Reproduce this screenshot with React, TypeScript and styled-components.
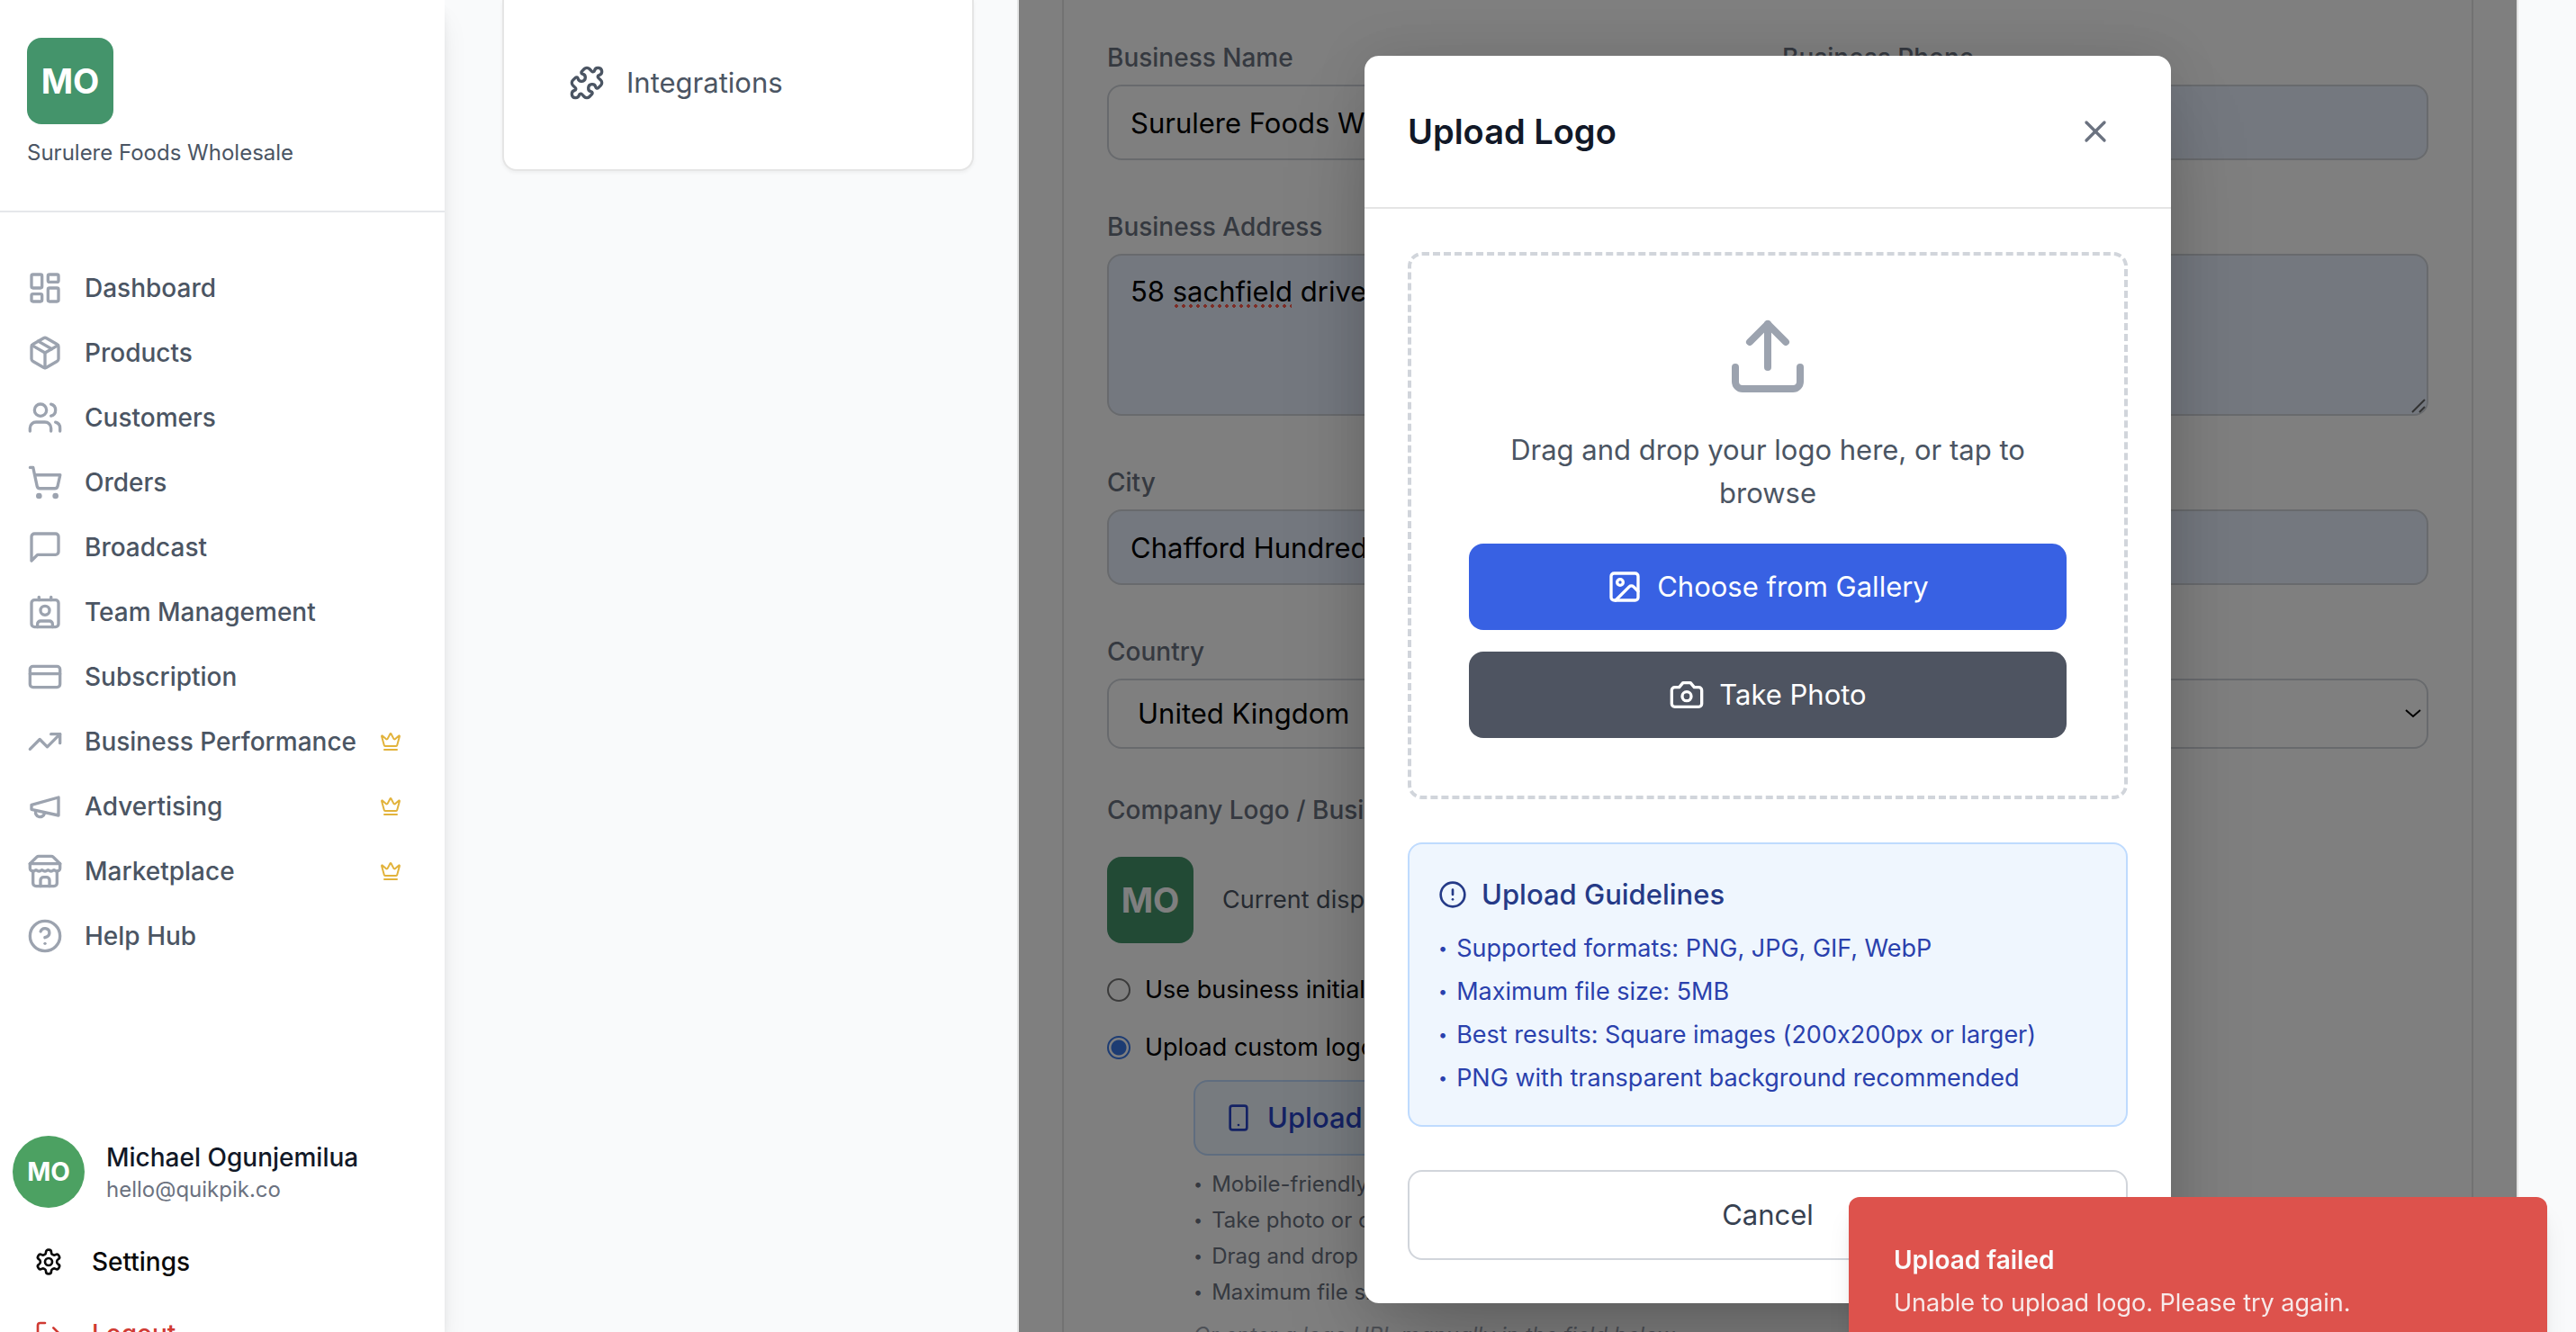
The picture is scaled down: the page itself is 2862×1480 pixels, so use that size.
import React from "react";
import styled, { createGlobalStyle, css } from "styled-components";
import {
  LayoutDashboard,
  Package,
  Users,
  ShoppingCart,
  Contact,
  CreditCard,
  TrendingUp,
  CircleHelp,
  Crown,
  Upload,
  Image as ImageIcon,
  CircleAlert,
  Smartphone,
  X,
  Puzzle,
  LogOut,
} from "lucide-react";

const GlobalStyle = createGlobalStyle`
  *, *::before, *::after { box-sizing: border-box; }
  body {
    margin: 0;
    overflow: hidden;
    background: #f9fafb;
    color: #0a0a0a;
    font-family: Inter, "Noto Sans", "Liberation Sans", sans-serif;
    font-feature-settings: "calt" 0;
    font-size: 28px;
    line-height: 40px;
  }
  button, input, textarea, select { font: inherit; color: inherit; }
  h2, h3, p, ul { margin: 0; padding: 0; }
  ul { list-style: none; }
  svg { display: block; flex: none; }
`;

/* ---------- icons ---------- */

type IconProps = { size?: number };

const Stroke = ({ size = 40, children }: IconProps & { children: React.ReactNode }) => (
  <svg
    width={size}
    height={size}
    viewBox="0 0 24 24"
    fill="none"
    stroke="currentColor"
    strokeWidth={2}
    strokeLinecap="round"
    strokeLinejoin="round"
    aria-hidden="true"
  >
    {children}
  </svg>
);

const ChatIcon = (p: IconProps) => (
  <Stroke {...p}>
    <path d="M21 15a2 2 0 0 1-2 2H7l-4 4V5a2 2 0 0 1 2-2h14a2 2 0 0 1 2 2z" />
  </Stroke>
);

const MegaphoneIcon = (p: IconProps) => (
  <Stroke {...p}>
    <path d="m3 11 18-5v12L3 14v-3z" />
    <path d="M11.6 16.8a3 3 0 1 1-5.8-1.6" />
  </Stroke>
);

const StoreIcon = (p: IconProps) => (
  <Stroke {...p}>
    <path d="m2 7 4.41-4.41A2 2 0 0 1 7.83 2h8.34a2 2 0 0 1 1.42.59L22 7" />
    <path d="M4 12v8a2 2 0 0 0 2 2h12a2 2 0 0 0 2-2v-8" />
    <path d="M15 22v-4a2 2 0 0 0-2-2h-2a2 2 0 0 0-2 2v4" />
    <path d="M2 7h20" />
    <path d="M22 7v3a2 2 0 0 1-2 2a2.7 2.7 0 0 1-1.59-.63.7.7 0 0 0-.82 0A2.7 2.7 0 0 1 16 12a2.7 2.7 0 0 1-1.59-.63.7.7 0 0 0-.82 0A2.7 2.7 0 0 1 12 12a2.7 2.7 0 0 1-1.59-.63.7.7 0 0 0-.82 0A2.7 2.7 0 0 1 8 12a2.7 2.7 0 0 1-1.59-.63.7.7 0 0 0-.82 0A2.7 2.7 0 0 1 4 12a2 2 0 0 1-2-2V7" />
  </Stroke>
);

const CameraIcon = (p: IconProps) => (
  <Stroke {...p}>
    <path d="M14.5 4h-5L7 7H4a2 2 0 0 0-2 2v9a2 2 0 0 0 2 2h16a2 2 0 0 0 2-2V9a2 2 0 0 0-2-2h-3l-2.5-3z" />
    <circle cx="12" cy="13" r="3" />
  </Stroke>
);

const GearIcon = (p: IconProps) => (
  <Stroke {...p}>
    <path d="M12.22 2h-.44a2 2 0 0 0-2 2v.18a2 2 0 0 1-1 1.73l-.43.25a2 2 0 0 1-2 0l-.15-.08a2 2 0 0 0-2.73.73l-.22.38a2 2 0 0 0 .73 2.73l.15.1a2 2 0 0 1 1 1.72v.51a2 2 0 0 1-1 1.74l-.15.09a2 2 0 0 0-.73 2.73l.22.38a2 2 0 0 0 2.73.73l.15-.08a2 2 0 0 1 2 0l.43.25a2 2 0 0 1 1 1.73V20a2 2 0 0 0 2 2h.44a2 2 0 0 0 2-2v-.18a2 2 0 0 1 1-1.73l.43-.25a2 2 0 0 1 2 0l.15.08a2 2 0 0 0 2.73-.73l.22-.39a2 2 0 0 0-.73-2.73l-.15-.08a2 2 0 0 1-1-1.74v-.5a2 2 0 0 1 1-1.74l.15-.09a2 2 0 0 0 .73-2.73l-.22-.38a2 2 0 0 0-2.73-.73l-.15.08a2 2 0 0 1-2 0l-.43-.25a2 2 0 0 1-1-1.73V4a2 2 0 0 0-2-2z" />
    <circle cx="12" cy="12" r="3" />
  </Stroke>
);

/* ---------- shell ---------- */

const Shell = styled.div`
  display: flex;
  height: 100vh;
  overflow: hidden;
`;

const Sidebar = styled.aside`
  display: flex;
  flex: none;
  flex-direction: column;
  width: 494px;
  background: #fff;
  box-shadow: 0 20px 30px -6px rgba(0, 0, 0, 0.1), 0 8px 12px -4px rgba(0, 0, 0, 0.1);
`;

const Brand = styled.header`
  display: flex;
  flex-direction: column;
  gap: 16px;
  padding: 42px 30px 48px;
  border-bottom: 2px solid #e5e7eb;
`;

const LogoTile = styled.div`
  display: flex;
  flex: none;
  align-items: center;
  justify-content: center;
  width: 96px;
  height: 96px;
  border-radius: 16px;
  background: #44946b;
  color: #fff;
  font-size: 38px;
  font-weight: 700;
`;

const BrandName = styled.p`
  color: #4b5563;
  font-size: 24px;
  line-height: 32px;
`;

const Nav = styled.nav`
  display: flex;
  flex-direction: column;
  padding: 48px 48px 0 30px;
`;

const NavLink = styled.a`
  display: flex;
  align-items: center;
  gap: 24px;
  height: 72px;
  color: #4b5563;
  font-weight: 500;
  text-decoration: none;
  white-space: nowrap;

  > svg:first-child { color: #9ca3af; }
  > svg:last-child:not(:first-child) { margin-left: auto; color: #e2b33c; }
`;

const Account = styled.div`
  display: flex;
  flex-direction: column;
  margin-top: 186px;
  padding: 0 14px;
`;

const Profile = styled.div`
  display: flex;
  align-items: center;
  gap: 24px;
  margin-bottom: 20px;
`;

const Avatar = styled.div`
  display: flex;
  align-items: center;
  justify-content: center;
  width: 80px;
  height: 80px;
  border-radius: 50%;
  background: #4ca162;
  color: #fff;
  font-weight: 700;
`;

const ProfileText = styled.div`
  padding-top: 4px;
`;

const ProfileName = styled.p`
  color: #111827;
  font-weight: 500;
  line-height: 36px;
`;

const ProfileMail = styled.p`
  color: #6b7280;
  font-size: 24px;
  line-height: 36px;
`;

const AccountAction = styled.button<{ $danger?: boolean }>`
  display: flex;
  align-items: center;
  gap: 32px;
  height: 80px;
  padding: 0 24px;
  border: 0;
  background: none;
  color: ${(p) => (p.$danger ? "#d03a33" : "#0a0a0a")};
  font-weight: 500;
`;

const Main = styled.main`
  display: grid;
  flex: 1;
  grid-template-columns: repeat(4, minmax(0, 1fr));
  gap: 48px;
  align-items: start;
  min-width: 0;
  padding: 0 64px;
`;

const TabsCard = styled.section`
  padding: 44px 50px 48px;
  border: 2px solid #e5e5e5;
  border-top: 0;
  border-radius: 0 0 16px 16px;
  background: #fff;
  box-shadow: 0 2px 4px rgba(0, 0, 0, 0.05);
`;

const TabButton = styled.button`
  display: flex;
  align-items: center;
  gap: 24px;
  width: 100%;
  height: 96px;
  padding: 0 22px;
  border: 0;
  background: none;
  color: #4b5563;
  font-size: 31px;
`;

const SettingsCard = styled.section`
  position: relative;
  grid-column: span 3;
  height: 100vh;
  overflow: hidden;
  padding: 0 48px;
  border: solid #e5e5e5;
  border-width: 0 2px;
  background: #fff;
`;

/* ---------- form ---------- */

const FormPanel = styled.form`
  padding: 50px 48px 0;
  border: solid #e5e5e5;
  border-width: 0 2px;
`;

const Fields = styled.div`
  display: grid;
  grid-template-columns: 1fr 1fr;
  gap: 60px 32px;
`;

const Field = styled.div<{ $wide?: boolean }>`
  display: flex;
  flex-direction: column;
  gap: 16px;
  grid-column: ${(p) => (p.$wide ? "1 / -1" : "auto")};
`;

const FieldLabel = styled.label`
  color: #6b7280;
  font-weight: 500;
  line-height: 28px;
`;

const boxed = css`
  display: block;
  width: 100%;
  border: 2px solid #d1d5db;
  border-radius: 16px;
  color: #000;
  font-size: 31px;
  line-height: 48px;
`;

const TextInput = styled.input<{ $filled?: boolean }>`
  ${boxed}
  height: 84px;
  padding: 0 24px;
  background: ${(p) => (p.$filled ? "#e8f0fe" : "#fff")};
`;

const Overlaid = styled.div`
  position: relative;
`;

const TextArea = styled.textarea`
  ${boxed}
  height: 180px;
  padding: 16px 24px;
  background: #e8f0fe;
  resize: none;
`;

const SpellingDots = styled.span`
  position: absolute;
  top: 56px;
  left: 73px;
  width: 132px;
  height: 4px;
  background: radial-gradient(circle, #ff5a4d 2px, transparent 2px) 0 0 / 8px 4px;
`;

const ResizeGrip = styled.svg`
  position: absolute;
  right: 3px;
  bottom: 3px;
`;

const Select = styled.select`
  ${boxed}
  height: 78px;
  padding: 0 32px;
  background: #fff;
  appearance: none;
`;

const SelectArrow = styled.svg`
  position: absolute;
  top: 34px;
  right: 8px;
  pointer-events: none;
`;

const LogoSection = styled.section`
  display: flex;
  flex-direction: column;
  margin-top: 48px;
`;

const LogoHeading = styled.h3`
  margin: 0;
  color: #6b7280;
  font-size: 28px;
  font-weight: 500;
`;

const CurrentLogo = styled.div`
  display: flex;
  align-items: center;
  gap: 32px;
  margin: 32px 0;
`;

const CurrentText = styled.p`
  color: #4b5563;
  font-size: 27px;
`;

const RadioGroup = styled.div`
  display: flex;
  flex-direction: column;
  gap: 24px;
`;

const RadioRow = styled.label`
  display: flex;
  align-items: center;
  gap: 16px;
  color: #000;
  font-size: 27px;
`;

const Radio = styled.input`
  width: 26px;
  height: 26px;
  margin: 0;
  border: 2px solid #767676;
  border-radius: 50%;
  background: #fff;
  appearance: none;

  &:checked {
    border-color: #3b78e7;
    background: radial-gradient(circle, #3b78e7 8px, #fff 9px);
  }
`;

const UploadBlock = styled.div`
  display: flex;
  flex-direction: column;
  align-items: flex-start;
  gap: 16px;
  margin: 16px 0 0 96px;
`;

const UploadButton = styled.button`
  display: flex;
  align-items: center;
  gap: 16px;
  height: 84px;
  padding: 0 32px;
  border: 2px solid #bfdbfe;
  border-radius: 16px;
  background: #eff6ff;
  color: #2945c8;
  font-size: 31px;
  font-weight: 500;
`;

const HintList = styled.ul`
  display: flex;
  flex-direction: column;
  gap: 8px;
  color: #6b7280;
  font-size: 24px;
  line-height: 32px;
`;

const UrlNote = styled.p`
  color: #9ca3af;
  font-size: 24px;
  font-style: italic;
  line-height: 32px;
`;

const ListItem = styled.li`
  display: flex;
  gap: 10px;
`;

const Bullet = styled.span`
  font-size: 18px;
`;

/* ---------- dialog ---------- */

const Backdrop = styled.div`
  position: absolute;
  inset: 0;
  display: flex;
  align-items: flex-start;
  justify-content: center;
  padding: 62px 32px 0;
  background: rgba(0, 0, 0, 0.5);
`;

const Dialog = styled.div`
  width: 100%;
  max-width: 896px;
  border-radius: 16px;
  background: #fff;
  box-shadow: 0 50px 100px -24px rgba(0, 0, 0, 0.25), 0 0 60px rgba(0, 0, 0, 0.1);
`;

const DialogHeader = styled.header`
  display: flex;
  align-items: center;
  justify-content: space-between;
  padding: 48px;
  border-bottom: 2px solid #e5e5e5;
`;

const DialogTitle = styled.h2`
  color: #111827;
  font-size: 38px;
  font-weight: 600;
  line-height: 56px;
`;

const CloseButton = styled.button`
  padding: 16px;
  border: 0;
  background: none;
  color: #6b7280;
`;

const DialogBody = styled.div`
  display: flex;
  flex-direction: column;
  gap: 48px;
  padding: 48px;
`;

const DropZone = styled.div`
  display: flex;
  flex-direction: column;
  align-items: center;
  padding: 64px;
  border: 4px dashed #d1d5db;
  border-radius: 16px;
  color: #9ca3af;
`;

const DropText = styled.p`
  margin: 32px 0;
  color: #4b5563;
  font-size: 31px;
  line-height: 48px;
  text-align: center;
`;

const DropActions = styled.div`
  display: flex;
  flex-direction: column;
  gap: 24px;
  width: 100%;
`;

const SolidButton = styled.button<{ $tone: string }>`
  display: flex;
  align-items: center;
  justify-content: center;
  gap: 16px;
  height: 96px;
  border: 0;
  border-radius: 16px;
  background: ${(p) => p.$tone};
  color: #fff;
  font-size: 31px;
`;

const Guidelines = styled.section`
  padding: 32px;
  border: 2px solid #bfdbfe;
  border-radius: 16px;
  background: #eff6fe;
`;

const GuidelinesTitle = styled.h3`
  display: flex;
  align-items: center;
  gap: 16px;
  margin: 0 0 16px;
  color: #253a87;
  font-size: 31px;
  font-weight: 500;
  line-height: 48px;
`;

const GuidelinesList = styled.ul`
  display: flex;
  flex-direction: column;
  gap: 8px;
  color: #2a41ad;
  font-size: 27px;
`;

const CancelButton = styled.button`
  height: 100px;
  border: 2px solid #d1d5db;
  border-radius: 16px;
  background: #fff;
  color: #374151;
  font-size: 31px;
`;

const Toast = styled.div`
  position: fixed;
  right: 32px;
  bottom: -38px;
  display: flex;
  flex-direction: column;
  gap: 8px;
  width: 776px;
  padding: 50px;
  border-radius: 12px;
  background: #dd524c;
  color: #fafafa;
  box-shadow: 0 20px 30px -6px rgba(0, 0, 0, 0.1), 0 8px 12px -4px rgba(0, 0, 0, 0.1);
`;

const ToastTitle = styled.p`
  font-weight: 600;
`;

const ToastText = styled.p`
  font-size: 27px;
  opacity: 0.9;
`;

/* ---------- data ---------- */

const navItems = [
  { label: "Dashboard", Icon: LayoutDashboard },
  { label: "Products", Icon: Package },
  { label: "Customers", Icon: Users },
  { label: "Orders", Icon: ShoppingCart },
  { label: "Broadcast", Icon: ChatIcon },
  { label: "Team Management", Icon: Contact },
  { label: "Subscription", Icon: CreditCard },
  { label: "Business Performance", Icon: TrendingUp, premium: true },
  { label: "Advertising", Icon: MegaphoneIcon, premium: true },
  { label: "Marketplace", Icon: StoreIcon, premium: true },
  { label: "Help Hub", Icon: CircleHelp },
];

const uploadHints = [
  "Mobile-friendly upload",
  "Take photo or choose image",
  "Drag and drop supported",
  "Maximum file size: 5MB",
];

const guidelines = [
  "Supported formats: PNG, JPG, GIF, WebP",
  "Maximum file size: 5MB",
  "Best results: Square images (200x200px or larger)",
  "PNG with transparent background recommended",
];

const BulletItem = ({ text }: { text: string }) => (
  <ListItem>
    <Bullet>•</Bullet>
    {text}
  </ListItem>
);

const UploadDialog = () => (
  <Dialog role="dialog" aria-labelledby="upload-title">
    <DialogHeader>
      <DialogTitle id="upload-title">Upload Logo</DialogTitle>
      <CloseButton type="button" aria-label="Close">
        <X size={40} />
      </CloseButton>
    </DialogHeader>
    <DialogBody>
      <DropZone>
        <Upload size={96} />
        <DropText>Drag and drop your logo here, or tap to browse</DropText>
        <DropActions>
          <SolidButton type="button" $tone="#3861e3">
            <ImageIcon size={40} />
            Choose from Gallery
          </SolidButton>
          <SolidButton type="button" $tone="#4e5461">
            <CameraIcon size={40} />
            Take Photo
          </SolidButton>
        </DropActions>
      </DropZone>
      <Guidelines>
        <GuidelinesTitle>
          <CircleAlert size={32} />
          Upload Guidelines
        </GuidelinesTitle>
        <GuidelinesList>
          {guidelines.map((g) => (
            <BulletItem key={g} text={g} />
          ))}
        </GuidelinesList>
      </Guidelines>
      <CancelButton type="button">Cancel</CancelButton>
    </DialogBody>
  </Dialog>
);

const BusinessForm = () => (
  <FormPanel>
    <Fields>
      <Field>
        <FieldLabel htmlFor="name">Business Name</FieldLabel>
        <TextInput id="name" defaultValue="Surulere Foods Wholesale" />
      </Field>
      <Field>
        <FieldLabel htmlFor="phone">Business Phone</FieldLabel>
        <TextInput id="phone" $filled />
      </Field>
      <Field $wide>
        <FieldLabel htmlFor="address">Business Address</FieldLabel>
        <Overlaid>
          <TextArea id="address" defaultValue="58 sachfield drive" spellCheck={false} />
          <SpellingDots />
          <ResizeGrip width="16" height="16" viewBox="0 0 16 16" stroke="#666" strokeWidth="2">
            <path d="M1 15 15 1M9 15l6-6" />
          </ResizeGrip>
        </Overlaid>
      </Field>
      <Field $wide>
        <FieldLabel htmlFor="city">City</FieldLabel>
        <TextInput id="city" defaultValue="Chafford Hundred" $filled />
      </Field>
      <Field $wide>
        <FieldLabel htmlFor="country">Country</FieldLabel>
        <Overlaid>
          <Select id="country" defaultValue="uk">
            <option value="uk">United Kingdom</option>
          </Select>
          <SelectArrow width="18" height="10" viewBox="0 0 18 10" fill="none" stroke="#000" strokeWidth="2">
            <path d="M1 1l8 7 8-7" />
          </SelectArrow>
        </Overlaid>
      </Field>
    </Fields>
    <LogoSection>
      <LogoHeading>Company Logo / Business Display</LogoHeading>
      <CurrentLogo>
        <LogoTile>MO</LogoTile>
        <CurrentText>Current display</CurrentText>
      </CurrentLogo>
      <RadioGroup>
        <RadioRow>
          <Radio type="radio" name="logo" value="initials" />
          Use business initials
        </RadioRow>
        <RadioRow>
          <Radio type="radio" name="logo" value="custom" defaultChecked />
          Upload custom logo
        </RadioRow>
      </RadioGroup>
      <UploadBlock>
        <UploadButton type="button">
          <Smartphone size={32} />
          Upload Logo
        </UploadButton>
        <HintList>
          {uploadHints.map((h) => (
            <BulletItem key={h} text={h} />
          ))}
        </HintList>
        <UrlNote>Or enter a logo URL manually in the field below</UrlNote>
      </UploadBlock>
    </LogoSection>
  </FormPanel>
);

export default function App() {
  return (
    <>
      <GlobalStyle />
      <Shell>
        <Sidebar>
          <Brand>
            <LogoTile>MO</LogoTile>
            <BrandName>Surulere Foods Wholesale</BrandName>
          </Brand>
          <Nav>
            {navItems.map(({ label, Icon, premium }) => (
              <NavLink href="#" key={label}>
                <Icon size={40} />
                {label}
                {premium && <Crown size={24} />}
              </NavLink>
            ))}
          </Nav>
          <Account>
            <Profile>
              <Avatar>MO</Avatar>
              <ProfileText>
                <ProfileName>Michael Ogunjemilua</ProfileName>
                <ProfileMail>hello@quikpik.co</ProfileMail>
              </ProfileText>
            </Profile>
            <AccountAction type="button">
              <GearIcon size={32} />
              Settings
            </AccountAction>
            <AccountAction type="button" $danger>
              <LogOut size={32} />
              Logout
            </AccountAction>
          </Account>
        </Sidebar>
        <Main>
          <TabsCard>
            <TabButton type="button">
              <Puzzle size={40} />
              Integrations
            </TabButton>
          </TabsCard>
          <SettingsCard>
            <BusinessForm />
            <Backdrop>
              <UploadDialog />
            </Backdrop>
          </SettingsCard>
        </Main>
      </Shell>
      <Toast role="status">
        <ToastTitle>Upload failed</ToastTitle>
        <ToastText>Unable to upload logo. Please try again.</ToastText>
      </Toast>
    </>
  );
}
